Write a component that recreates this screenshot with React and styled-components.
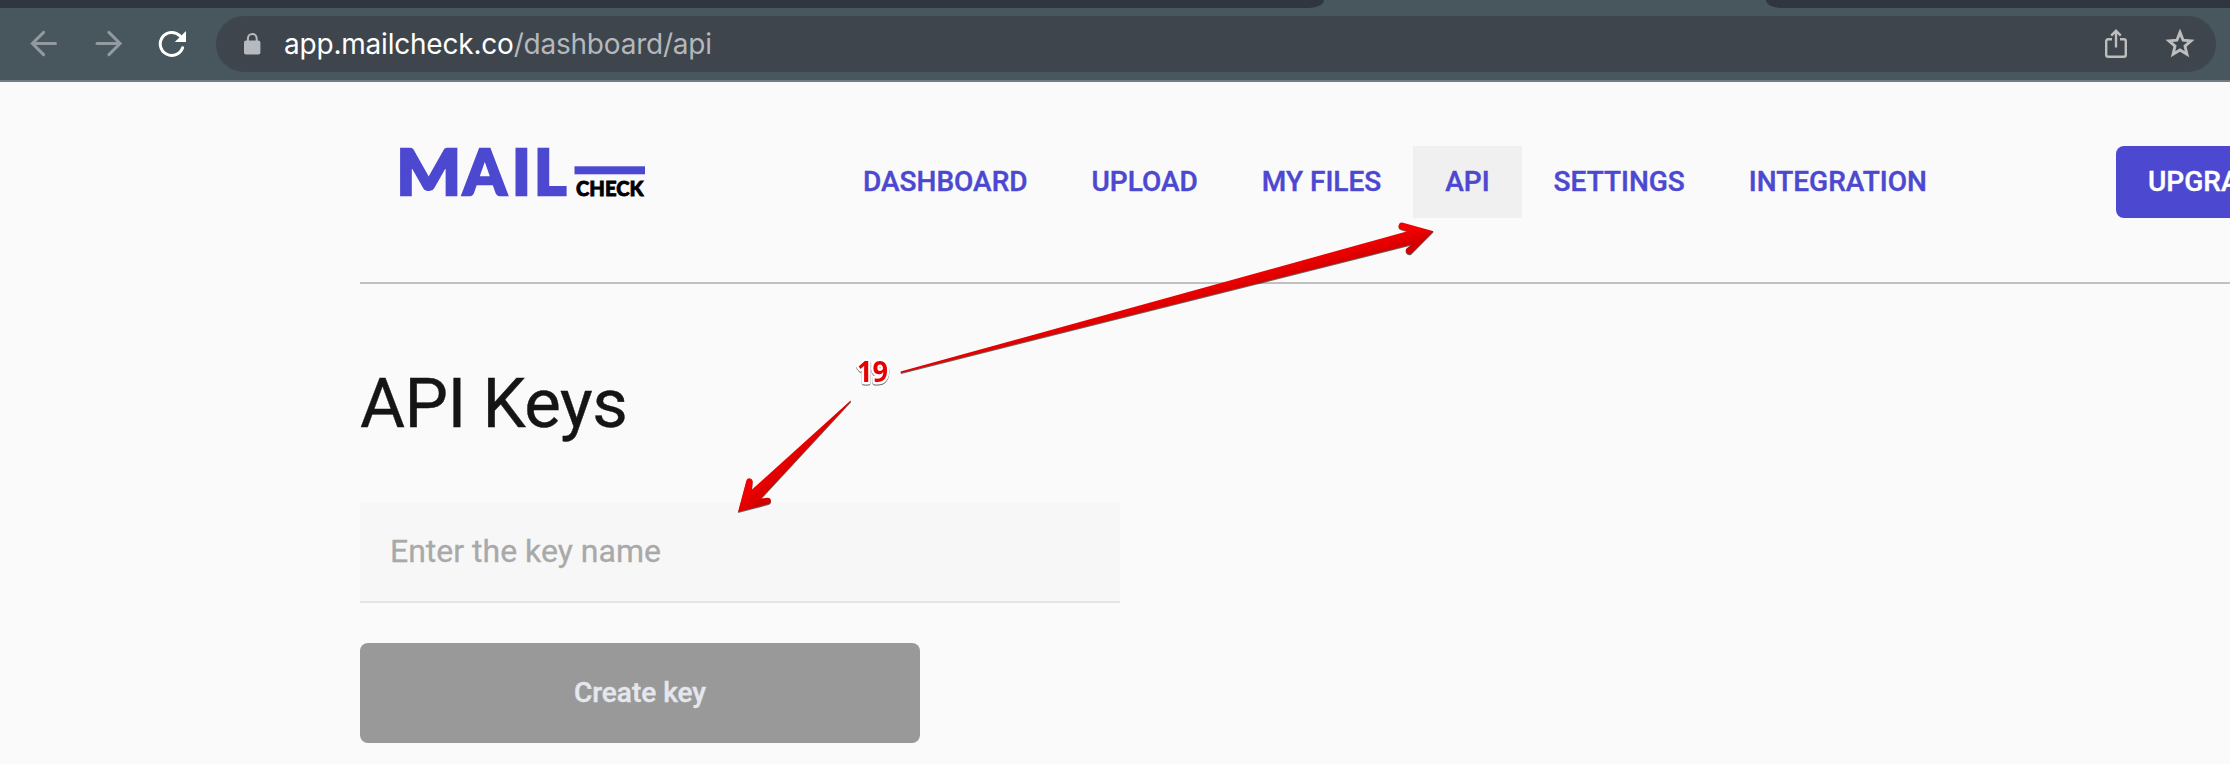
import React from "react";
import styled, { createGlobalStyle } from "styled-components";

const GlobalStyle = createGlobalStyle`
  *, *::before, *::after { box-sizing: border-box; }
  body {
    margin: 0;
    background: #fafafa;
    font-family: Roboto, "Liberation Sans", sans-serif;
    overflow: hidden;
  }
`;

const Screen = styled.div`
  position: relative;
  width: 2230px;
  height: 764px;
  overflow: hidden;
  background: #fafafa;
`;

const TabStrip = styled.div`
  display: flex;
  justify-content: space-between;
  height: 8px;
  background: #48565e;
`;

const TabEdge = styled.div`
  width: ${(p) => p.$width}px;
  background: #2f363e;
  border-radius: ${(p) => (p.$side === "left" ? "0 0 16px 0 / 0 0 8px 0" : "0 0 0 16px / 0 0 0 8px")};
`;

const Toolbar = styled.div`
  display: flex;
  align-items: center;
  height: 74px;
  padding: 0 14px 0 30px;
  background: #48565e;
  border-bottom: 2px solid #727b86;
`;

const NavButtons = styled.div`
  display: flex;
  align-items: center;
  gap: 36px;
  width: 186px;
`;

const Icon = styled.svg`
  display: block;
  flex: none;
  overflow: visible;
`;

const Omnibox = styled.div`
  display: flex;
  align-items: center;
  flex: 1;
  height: 56px;
  padding: 0 21px 0 28px;
  border-radius: 28px;
  background: #3e454c;
`;

const Url = styled.div`
  flex: 1;
  margin-left: 23px;
  color: #b4b8bc;
  font-family: Inter, sans-serif;
  font-size: 28px;
  line-height: 56px;
  letter-spacing: -0.21px;
`;

const Host = styled.span`
  color: #ffffff;
`;

const OmniActions = styled.div`
  display: flex;
  align-items: center;
  gap: 38px;
`;

const Page = styled.main`
  padding-left: 360px;
`;

const Header = styled.header`
  display: flex;
  align-items: flex-start;
  height: 202px;
  padding-top: 64px;
  border-bottom: 2px solid #c1c1c1;
`;

const Logo = styled.div`
  flex: none;
  width: 471px;
  padding-left: 40px;
`;

const Nav = styled.nav`
  display: flex;
  flex: none;
  width: 1285px;
`;

const NavLink = styled.a`
  height: 72px;
  padding: 0 32px;
  color: #4c48d0;
  background: ${(p) => (p.$active ? "#f0f0f0" : "transparent")};
  font-size: 28px;
  font-weight: 500;
  line-height: 71px;
  white-space: nowrap;
  -webkit-text-stroke: 0.4px currentColor;
`;

const Upgrade = styled.button`
  flex: none;
  height: 72px;
  padding: 0 32px;
  border: 0;
  border-radius: 8px;
  background: #4c48d0;
  color: #ffffff;
  font: 500 28px/72px Roboto, sans-serif;
  -webkit-text-stroke: 0.4px currentColor;
`;

const Title = styled.h1`
  margin: 80px 0 0;
  color: #151515;
  font-size: 69px;
  font-weight: 400;
  line-height: 80px;
  letter-spacing: -0.5px;
  -webkit-text-stroke: 0.4px currentColor;
`;

const Form = styled.form`
  display: flex;
  flex-direction: column;
  align-items: flex-start;
  gap: 40px;
  margin-top: 59px;
`;

const KeyInput = styled.input`
  width: 760px;
  height: 100px;
  padding: 0 30px 2px;
  border: 0;
  border-bottom: 2px solid #e4e4e4;
  outline: 0;
  background: #f7f7f7;
  font: 400 32px Roboto, sans-serif;
  &::placeholder { color: #a9a9a9; opacity: 1; -webkit-text-stroke: 0.3px #a9a9a9; }
`;

const CreateButton = styled.button`
  width: 560px;
  height: 100px;
  padding: 0 0 1px;
  border: 0;
  border-radius: 8px;
  background: #999999;
  color: #e5e7ee;
  font: 500 28px/99px Roboto, sans-serif;
  -webkit-text-stroke: 0.4px currentColor;
`;

const Annotation = styled.svg`
  position: absolute;
  inset: 0;
  pointer-events: none;
`;

const Arrow = styled.path`
  fill: url(#${(p) => p.$paint});
  filter: drop-shadow(0.5px 1px 0.5px rgba(0, 0, 0, 0.6));
`;

const StepLabel = styled.text`
  fill: #e60000;
  stroke: #ffffff;
  stroke-width: 5px;
  stroke-linejoin: round;
  paint-order: stroke;
  font: 700 29px "Open Sans", sans-serif;
  filter: drop-shadow(0.5px 1.5px 0.5px rgba(0, 0, 0, 0.6));
`;

const links = ["DASHBOARD", "UPLOAD", "MY FILES", "API", "SETTINGS", "INTEGRATION"];

function ArrowIcon({ flip }) {
  return (
    <Icon width="28" height="28" viewBox="0 0 28 28" fill="none" stroke="#929aa0" strokeWidth="3" strokeLinecap="round">
      <path
        d="M25.5 13.5H2.6M13.6 2.4L2.4 13.5L13.6 24.6"
        transform={flip ? "translate(28.5 0) scale(-1 1)" : undefined}
      />
    </Icon>
  );
}

function ReloadIcon() {
  return (
    <Icon width="28" height="28" viewBox="0 0 28 28">
      <path d="M24.6 17.7A11.5 11.5 0 1 1 22 5.9" fill="none" stroke="#fff" strokeWidth="3" strokeLinecap="round" />
      <path d="M28 1V12H16.8Z" fill="#fff" />
    </Icon>
  );
}

function LockIcon() {
  return (
    <Icon width="17" height="22" viewBox="0 0 17 22">
      <path d="M3.9 9V5.4a4.4 4.4 0 0 1 8.8 0V9" fill="none" stroke="#b6babe" strokeWidth="2" />
      <rect x="0" y="7.4" width="16.4" height="14" rx="2" fill="#b6babe" />
    </Icon>
  );
}

function ShareIcon() {
  return (
    <Icon width="22" height="30" viewBox="0 0 22 30" fill="none" stroke="#bdbdbd" strokeWidth="2.4">
      <path d="M7 10.3H3.2Q1.2 10.3 1.2 12.3V25.8Q1.2 27.8 3.2 27.8H18.8Q20.8 27.8 20.8 25.8V12.3Q20.8 10.3 18.8 10.3H15" />
      <path d="M11 18.6V2.2M6.2 6.6L11 1.8L15.8 6.6" />
    </Icon>
  );
}

function StarIcon() {
  return (
    <Icon width="30" height="30" viewBox="0 0 30 30">
      <path
        d="M15 3.4L18.1 11.2L26 11.9L20 17.1L21.9 25.2L15 20.9L8.1 25.2L10 17.1L4 11.9L11.9 11.2Z"
        fill="none"
        stroke="#bdbdbd"
        strokeWidth="2.9"
      />
    </Icon>
  );
}

function MailLogo() {
  return (
    <Icon width="250" height="56" viewBox="0 0 250 56" fontFamily="Lato, sans-serif" fontWeight="900">
      <g fontSize="62" fill="#4c48d0" stroke="#4c48d0" strokeWidth="2.4">
        <text x="-3.5" y="49" transform="scale(1.1 1)">M</text>
        <text y="49" x="63 112 134">AIL</text>
      </g>
      <rect x="174.5" y="20.3" width="70.5" height="8" fill="#4c48d0" />
      <text x="176" y="50" fontSize="20.5" fill="#000" stroke="#000" strokeWidth="0.8" textLength="67.5" lengthAdjust="spacingAndGlyphs">CHECK</text>
    </Icon>
  );
}

export default function App() {
  return (
    <Screen>
      <GlobalStyle />
      <TabStrip>
        <TabEdge $side="left" $width={1324} />
        <TabEdge $side="right" $width={464} />
      </TabStrip>
      <Toolbar>
        <NavButtons>
          <ArrowIcon />
          <ArrowIcon flip />
          <ReloadIcon />
        </NavButtons>
        <Omnibox>
          <LockIcon />
          <Url>
            <Host>app.mailcheck.co</Host>/dashboard/api
          </Url>
          <OmniActions>
            <ShareIcon />
            <StarIcon />
          </OmniActions>
        </Omnibox>
      </Toolbar>

      <Page>
        <Header>
          <Logo>
            <MailLogo />
          </Logo>
          <Nav>
            {links.map((label) => (
              <NavLink key={label} $active={label === "API"}>
                {label}
              </NavLink>
            ))}
          </Nav>
          <Upgrade>UPGRADE</Upgrade>
        </Header>
        <Title>API Keys</Title>
        <Form>
          <KeyInput placeholder="Enter the key name" />
          <CreateButton type="button">Create key</CreateButton>
        </Form>
      </Page>

      <Annotation width="2230" height="764" viewBox="0 0 2230 764">
        <defs>
          <linearGradient id="shaftLong" gradientUnits="userSpaceOnUse" x1="1408" y1="230" x2="1412" y2="245">
            <stop offset="0" stopColor="#f40000" />
            <stop offset="1" stopColor="#d20000" />
          </linearGradient>
          <linearGradient id="shaftShort" gradientUnits="userSpaceOnUse" x1="750" y1="488" x2="762" y2="500">
            <stop offset="0" stopColor="#f40000" />
            <stop offset="1" stopColor="#d20000" />
          </linearGradient>
        </defs>
        <Arrow
          $paint="shaftLong"
          d="M900.5 371.6L1407.5 231.3L1401 229.3A3.4 3.4 0 0 1 1403 222.8L1433.6 231.3L1411.5 253.4A3.5 3.5 0 0 1 1406.5 248.6L1411.5 244.6L901 373Z"
        />
        <Arrow
          $paint="shaftShort"
          d="M850.6 400.4L752 489.5L752.6 482A3.2 3.2 0 0 0 746.4 480.5L738 512L768.5 504A3.2 3.2 0 0 0 767.5 497.7L761 498.5L850.9 401.5Z"
        />
        <StepLabel x="857" y="382" textLength="31" lengthAdjust="spacingAndGlyphs">19</StepLabel>
      </Annotation>
    </Screen>
  );
}
